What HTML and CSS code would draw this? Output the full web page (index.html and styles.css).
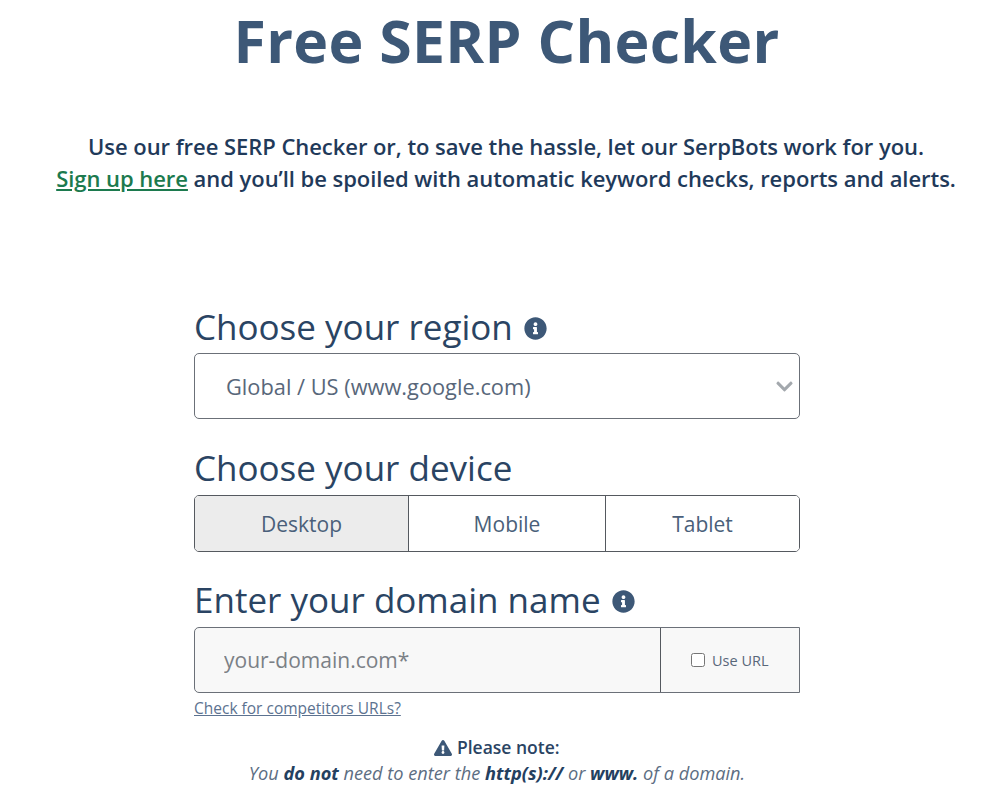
FILE: index.html
```html
<!DOCTYPE html>
<html lang="en">
<head>
  <meta charset="UTF-8">
  <meta name="viewport" content="width=device-width, initial-scale=1.0">
  <title>Free SERP Checker</title>
  <link rel="stylesheet" href="styles.css">
</head>
<body>
  <h1 class="page-title">Free SERP Checker</h1>

  <p class="intro">
    Use our free SERP Checker or, to save the hassle, let our SerpBots work for you.<br>
    <a href="#" class="signup-link">Sign up here</a> and you’ll be spoiled with automatic keyword checks, reports and alerts.
  </p>

  <form class="checker-form">
    <!-- region -->
    <h2 class="field-title">Choose your region
      <svg class="info-icon" viewBox="0 0 512 512"><path d="M256 8C119.043 8 8 119.083 8 256c0 136.997 111.043 248 248 248s248-111.003 248-248C504 119.083 392.957 8 256 8zm0 110c23.196 0 42 18.804 42 42s-18.804 42-42 42-42-18.804-42-42 18.804-42 42-42zm56 254c0 6.627-5.373 12-12 12h-88c-6.627 0-12-5.373-12-12v-24c0-6.627 5.373-12 12-12h12v-64h-12c-6.627 0-12-5.373-12-12v-24c0-6.627 5.373-12 12-12h64c6.627 0 12 5.373 12 12v100h12c6.627 0 12 5.373 12 12v24z"/></svg>
    </h2>
    <div class="select-wrap">
      <select class="region-select">
        <option>Global / US (www.google.com)</option>
      </select>
      <svg class="select-arrow" viewBox="0 0 448 512"><path d="M207.029 381.476L12.686 187.132c-9.373-9.373-9.373-24.569 0-33.941l22.667-22.667c9.357-9.357 24.522-9.375 33.901-.04L224 284.505l154.745-154.021c9.379-9.335 24.544-9.317 33.901.04l22.667 22.667c9.373 9.373 9.373 24.569 0 33.941L240.971 381.476c-9.373 9.372-24.569 9.372-33.942 0z"/></svg>
    </div>

    <!-- device -->
    <h2 class="field-title device-title">Choose your device</h2>
    <div class="device-tabs">
      <button type="button" class="device-tab active">Desktop</button>
      <button type="button" class="device-tab">Mobile</button>
      <button type="button" class="device-tab">Tablet</button>
    </div>

    <!-- domain -->
    <h2 class="field-title domain-title">Enter your domain name
      <svg class="info-icon" viewBox="0 0 512 512"><path d="M256 8C119.043 8 8 119.083 8 256c0 136.997 111.043 248 248 248s248-111.003 248-248C504 119.083 392.957 8 256 8zm0 110c23.196 0 42 18.804 42 42s-18.804 42-42 42-42-18.804-42-42 18.804-42 42-42zm56 254c0 6.627-5.373 12-12 12h-88c-6.627 0-12-5.373-12-12v-24c0-6.627 5.373-12 12-12h12v-64h-12c-6.627 0-12-5.373-12-12v-24c0-6.627 5.373-12 12-12h64c6.627 0 12 5.373 12 12v100h12c6.627 0 12 5.373 12 12v24z"/></svg>
    </h2>
    <div class="domain-row">
      <input type="text" class="domain-input" placeholder="your-domain.com*">
      <label class="url-option"><input type="checkbox" class="url-check"> Use URL</label>
    </div>
    <a href="#" class="competitors-link">Check for competitors URLs?</a>

    <div class="note">
      <div class="note-head">
        <svg class="warn-icon" viewBox="0 0 576 512"><path d="M569.517 440.013C587.975 472.007 564.806 512 527.94 512H48.054c-36.937 0-59.999-40.055-41.577-71.987L246.423 24.028c18.467-32.009 64.72-31.951 83.154 0l239.94 416.985zM288 354c-25.405 0-46 20.595-46 46s20.595 46 46 46 46-20.595 46-46-20.595-46-46-46zm-43.673-165.346l7.418 136c.347 6.364 5.609 11.346 11.982 11.346h48.546c6.373 0 11.635-4.982 11.982-11.346l7.418-136c.375-6.874-5.098-12.654-11.982-12.654h-63.383c-6.884 0-12.356 5.78-11.981 12.654z"/></svg>
        Please note:
      </div>
      <div class="note-text">You <b>do not</b> need to enter the <b>http(s)://</b> or <b>www.</b> of a domain.</div>
    </div>
  </form>
</body>
</html>
```

FILE: styles.css
```css
* {
  box-sizing: border-box;
}

html, body {
  margin: 0;
  padding: 0;
  overflow: hidden;
}

body {
  height: 800px;
  background: #fff;
  color: #24405f;
  font-family: "Open Sans", "Noto Sans", sans-serif;
}

.page-title {
  margin: 0;
  padding: 6px 0 0 13px;
  font-size: 59px;
  line-height: 68px;
  font-weight: 700;
  letter-spacing: 0.3px;
  text-align: center;
  color: #3d5877;
}

.intro {
  margin: 56px 0 0;
  padding-left: 12px;
  font-size: 22px;
  line-height: 32px;
  font-weight: 600;
  letter-spacing: -0.05px;
  text-align: center;
  color: #1f3a5a;
}

.signup-link {
  color: #1c7a4e;
}

.checker-form {
  width: 606px;
  margin: 112px 0 0 194px;
}

.field-title {
  display: flex;
  align-items: center;
  gap: 11px;
  margin: 0;
  font-size: 35px;
  line-height: 42px;
  font-weight: 400;
  color: #2a4463;
}

.info-icon {
  width: 23px;
  height: 23px;
  margin-top: 3px;
  fill: #3d5877;
}

.select-wrap {
  position: relative;
  margin-top: 5px;
}

.region-select {
  display: block;
  width: 100%;
  height: 66px;
  padding: 0 0 0 31px;
  appearance: none;
  background: #fff;
  border: 1px solid #6b7078;
  border-radius: 5px;
  font: 400 21.8px "Open Sans", "Noto Sans", sans-serif;
  color: #58677a;
}

.select-arrow {
  position: absolute;
  top: 24px;
  right: 7px;
  width: 17px;
  height: 19px;
  fill: #a3a8ad;
  pointer-events: none;
}

.device-title {
  margin-top: 28px;
}

.device-tabs {
  display: grid;
  grid-template-columns: 213px 197px 1fr;
  height: 57px;
  margin-top: 6px;
  border: 1px solid #55595f;
  border-radius: 5px;
  overflow: hidden;
}

.device-tab {
  padding: 0;
  background: #fff;
  border: none;
  border-left: 1px solid #55595f;
  font: 400 21px "Open Sans", "Noto Sans", sans-serif;
  color: #4a5f7a;
}

.device-tab:first-child {
  border-left: none;
}

.device-tab.active {
  background: #ececec;
}

.domain-title {
  margin-top: 27px;
}

.domain-row {
  display: flex;
  height: 66px;
  margin-top: 6px;
  background: #f8f8f8;
  border: 1px solid #6b7078;
  border-radius: 5px 0 0 5px;
}

.domain-input {
  flex: 1;
  min-width: 0;
  padding: 0 0 0 29px;
  background: transparent;
  border: none;
  font: 400 21px "Open Sans", "Noto Sans", sans-serif;
}

.domain-input::placeholder {
  color: #7b8086;
  opacity: 1;
}

.url-option {
  display: flex;
  align-items: center;
  gap: 7px;
  width: 139px;
  padding-left: 30px;
  border-left: 1px solid #55595f;
  font-size: 14.5px;
  color: #58677a;
}

.url-check {
  width: 14px;
  height: 14px;
  margin: 0;
}

.competitors-link {
  display: block;
  margin-top: 5px;
  font-size: 15.5px;
  line-height: 20px;
  color: #5c7290;
}

.note {
  margin-top: 16px;
  text-align: center;
  font-size: 17.5px;
  line-height: 26px;
}

.note-head {
  font-weight: 600;
  color: #2a4463;
}

.warn-icon {
  width: 18px;
  height: 16px;
  fill: #3d5877;
  vertical-align: -2px;
}

.note-text {
  font-size: 18.2px;
  font-style: italic;
  color: #5c6d82;
}

.note-text b {
  color: #24405f;
}
```
